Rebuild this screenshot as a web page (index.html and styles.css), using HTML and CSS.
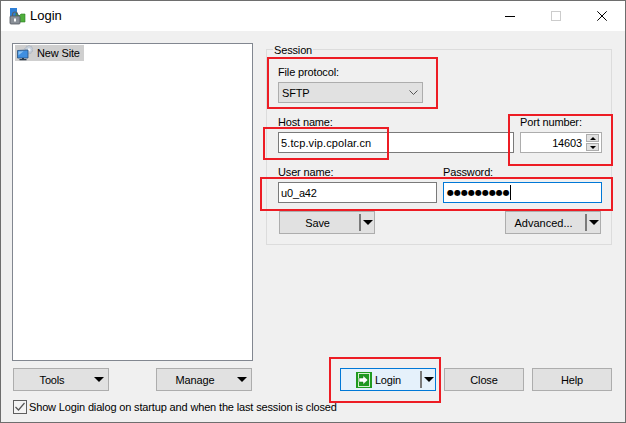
FILE: index.html
```html
<!DOCTYPE html>
<html lang="en">
<head>
<meta charset="utf-8">
<title>Login</title>
<link rel="stylesheet" href="styles.css">
</head>
<body>
<div class="window">
  <header class="titlebar">
    <svg class="app-icon" width="17" height="18" viewBox="0 0 17 18">
      <path d="M1 1h7v5l3 3-5 2H1z" fill="#2f7fd6"/>
      <path d="M7 6l3 3 2-2h4v8H7z" fill="#4fae3c" stroke="#2c7f22" stroke-width=".6"/>
      <path d="M3.500 9V7.500a2.500 2.500 0 0 1 5 0V9" fill="none" stroke="#5a6068" stroke-width="1.200"/>
      <rect x="1" y="9" width="10" height="8" rx="1" fill="#8a9098" stroke="#50565e" stroke-width=".8"/>
      <rect x="5" y="11.500" width="2" height="3" fill="#fff"/>
    </svg>
    <span class="title">Login</span>
    <div class="win-controls">
      <span class="win-btn"><svg width="10" height="10" viewBox="0 0 10 10"><path d="M0 5.500h10" stroke="#000"/></svg></span>
      <span class="win-btn"><svg width="10" height="10" viewBox="0 0 10 10"><rect x=".5" y=".5" width="9" height="9" fill="none" stroke="#ccc"/></svg></span>
      <span class="win-btn"><svg width="10" height="10" viewBox="0 0 10 10"><path d="M.3.3l9.400 9.400M9.700.3L.3 9.700" stroke="#000" fill="none"/></svg></span>
    </div>
  </header>

  <main class="content">
    <section class="left">
      <div class="tree">
        <div class="tree-item">
          <svg class="site-icon" width="16" height="16" viewBox="0 0 16 16">
            <path d="M12 0l1 1.500 1.500-.5.300 1.700 1.200.8-1 1.300 1 1.400-1.700.6-.3 1.700-1.500-.6-1 1.300-1-1.300-1.500.600-.3-1.700L7.500 6.200l1-1.400-1-1.300 1.700-.8.300-1.700 1.500.5z" fill="#c6cfda" stroke="#9aa5b3" stroke-width=".4"/>
            <circle cx="12" cy="4.800" r="1.500" fill="#f2f5f8"/>
            <path d="M.5 5.500l10.500-.5v8H.5z" fill="#3f8fe0" stroke="#28527f" stroke-width=".8"/>
            <path d="M1.500 6.500l5-.2-5 4z" fill="#8cc3f2"/>
            <path d="M5 13h2v1h2.500v1.200h-7V14H5z" fill="#2a3a4a"/>
          </svg>
          <span>New Site</span>
        </div>
      </div>
      <div class="left-buttons">
        <button class="btn wide"><span class="btn-label">Tools</span><span class="caret"></span></button>
        <button class="btn wide"><span class="btn-label">Manage</span><span class="caret"></span></button>
      </div>
      <label class="show-login">
        <svg class="check" width="14" height="14" viewBox="0 0 14 14">
          <rect x=".5" y=".5" width="13" height="13" fill="#f4f4f4" stroke="#5f5f5f"/>
          <path d="M2.500 7l3 3 6-7" fill="none" stroke="#555" stroke-width="1.200"/>
        </svg>
        <span>Show Login dialog on startup and when the last session is closed</span>
      </label>
    </section>

    <section class="right">
      <div class="session">
        <span class="legend">Session</span>
        <div class="field">
          <span class="field-label">File protocol:</span>
          <div class="select">
            <span>SFTP</span>
            <svg width="9" height="5" viewBox="0 0 9 5"><path d="M.5.500l4 4 4-4" fill="none" stroke="#555"/></svg>
          </div>
        </div>
        <div class="row">
          <div class="field grow">
            <span class="field-label">Host name:</span>
            <input class="input host-input" type="text" value="5.tcp.vip.cpolar.cn">
          </div>
          <div class="field port">
            <span class="field-label">Port number:</span>
            <div class="port-box">
              <span class="port-value">14603</span>
              <div class="spin">
                <span class="spin-btn"><span class="tri-up"></span></span>
                <span class="spin-btn"><span class="tri-down"></span></span>
              </div>
            </div>
          </div>
        </div>
        <div class="row">
          <div class="field grow">
            <span class="field-label">User name:</span>
            <input class="input" type="text" value="u0_a42">
          </div>
          <div class="field grow">
            <span class="field-label">Password:</span>
            <div class="input focused"><span class="dots">●●●●●●●●●</span><span class="text-caret"></span></div>
          </div>
        </div>
        <div class="session-buttons">
          <button class="btn wide split"><span class="btn-label">Save</span><span class="sep"></span><span class="caret"></span></button>
          <button class="btn wide split"><span class="btn-label advanced">Advanced...</span><span class="sep"></span><span class="caret"></span></button>
        </div>
      </div>

      <div class="main-buttons">
        <button class="btn wide split primary">
          <span class="btn-label">
            <svg class="login-icon" width="16" height="16" viewBox="0 0 16 16">
              <rect width="16" height="16" fill="#1f9a1f"/>
              <rect x="2.500" y="1.500" width="11" height="13" fill="none" stroke="#d6f0d0"/>
              <path d="M3 6h4V3.500L12 8l-5 4.500V10H3z" fill="#fff" stroke="#127012" stroke-width=".5"/>
            </svg>
            Login
          </span><span class="sep"></span><span class="caret"></span>
        </button>
        <button class="btn narrow">Close</button>
        <button class="btn narrow">Help</button>
      </div>
    </section>
  </main>

  <div class="mark mark-protocol"></div>
  <div class="mark mark-host"></div>
  <div class="mark mark-port"></div>
  <div class="mark mark-user"></div>
  <div class="mark mark-login"></div>
</div>
</body>
</html>
```

FILE: styles.css
```css
* { box-sizing: border-box; }
html, body { margin: 0; padding: 0; }
body {
  width: 626px;
  height: 423px;
  overflow: hidden;
  font: 11px/14px "Liberation Sans", Arial, sans-serif;
  letter-spacing: -0.15px;
  color: #000;
  background: #f0f0f0;
}
.window {
  position: relative;
  width: 626px;
  height: 423px;
  display: flex;
  flex-direction: column;
  border: 1px solid #6e6e6e;
  background: #f0f0f0;
}
.titlebar {
  flex: none;
  height: 30px;
  background: #fff;
  display: flex;
  align-items: center;
  padding-left: 8px;
}
.app-icon { flex: none; }
.title { margin-left: 4px; font-size: 13px; letter-spacing: 0; }
.win-controls { margin-left: auto; display: flex; }
.win-btn {
  width: 46px;
  height: 30px;
  display: flex;
  align-items: center;
  justify-content: center;
}
.content {
  flex: 1;
  display: flex;
  gap: 13px;
  padding: 12px 12px 8px 11px;
  min-height: 0;
}
.left { width: 241px; flex: none; display: flex; flex-direction: column; }
.tree {
  flex: 1;
  background: #fff;
  border: 1px solid #828790;
  padding: 1px 2px;
}
.tree-item {
  width: 69px;
  height: 16px;
  display: flex;
  align-items: center;
  gap: 4px;
  padding-left: 2px;
  background: #cfcfcf;
  white-space: nowrap;
}
.site-icon { flex: none; }
.left-buttons {
  margin-top: 7px;
  padding-left: 1px;
  padding-right: 1px;
  display: flex;
  justify-content: space-between;
}
.btn {
  font: inherit;
  letter-spacing: inherit;
  color: #000;
  height: 23px;
  padding: 0;
  background: #e1e1e1;
  border: 1px solid #adadad;
  display: flex;
  align-items: center;
  justify-content: center;
}
.wide { width: 96px; padding-right: 4px; }
.wide.split { padding-right: 2px; }
.narrow { width: 80px; }
.btn-label {
  flex: 1;
  display: flex;
  align-items: center;
  justify-content: center;
  gap: 3px;
}
.split .btn-label { padding-right: 4px; }
.advanced { letter-spacing: 0; }
.caret {
  flex: none;
  width: 0;
  height: 0;
  margin-left: 4px;
  border-left: 5px solid transparent;
  border-right: 5px solid transparent;
  border-top: 5px solid #000;
}
.split .caret { margin-left: 2px; margin-right: -1px; }
.sep { flex: none; width: 2px; height: 17px; background: #7a7a7a; }
.primary { background: #e5f1fb; border-color: #0078d7; }
.show-login {
  margin-top: 9px;
  height: 14px;
  padding-left: 1px;
  display: flex;
  align-items: center;
  gap: 2px;
  white-space: nowrap;
}
.check { flex: none; }
.right {
  width: 346px;
  flex: none;
  display: flex;
  flex-direction: column;
}
.session {
  position: relative;
  margin-top: 6px;
  height: 196px;
  border: 1px solid #dcdcdc;
  padding: 15px 9px 0 11px;
}
.legend {
  position: absolute;
  top: -7px;
  left: 6px;
  padding: 0 1px;
  background: #f0f0f0;
}
.field { display: flex; flex-direction: column; }
.field-label { height: 17px; }
.grow { flex: 1; min-width: 0; }
.port { width: 82px; flex: none; }
.row { display: flex; gap: 6px; margin-top: 12px; }
.select {
  width: 145px;
  height: 21px;
  background: #e1e1e1;
  border: 1px solid #adadad;
  display: flex;
  align-items: center;
  justify-content: space-between;
  padding: 0 4px 0 3px;
}
.input {
  display: flex;
  align-items: center;
  width: 100%;
  height: 21px;
  font: inherit;
  letter-spacing: inherit;
  color: #000;
  background: #fff;
  border: 1px solid #7a7a7a;
  border-radius: 0;
  padding: 0 2px;
  outline: none;
}
.host-input { letter-spacing: 0.12px; }
.focused { border-color: #0078d7; padding-left: 3px; }
.dots { font-size: 8px; letter-spacing: 0; font-family: "DejaVu Sans", sans-serif; }
.text-caret { width: 1px; height: 15px; background: #000; }
.port-box {
  height: 21px;
  background: #fff;
  border: 1px solid #adadad;
  display: flex;
  align-items: center;
  padding: 0 1px 0 0;
}
.port-value { flex: 1; text-align: right; padding-right: 4px; }
.spin { display: flex; flex-direction: column; gap: 1px; width: 13px; margin-right: 1px; }
.spin-btn {
  height: 8px;
  background: #e1e1e1;
  border: 1px solid #adadad;
  display: flex;
  align-items: center;
  justify-content: center;
}
.tri-up, .tri-down {
  width: 0;
  height: 0;
  border-left: 3px solid transparent;
  border-right: 3px solid transparent;
}
.tri-up { border-bottom: 3px solid #000; }
.tri-down { border-top: 3px solid #000; }
.session-buttons {
  display: flex;
  justify-content: space-between;
  margin: 8px 1px 0;
}
.main-buttons {
  margin-top: auto;
  margin-bottom: 23px;
  display: flex;
  justify-content: flex-end;
  gap: 8px;
}
.login-icon { flex: none; }
.mark {
  position: absolute;
  border: 2px solid #ed1c24;
  pointer-events: none;
}
.mark-protocol { left: 266px; top: 56px; width: 171px; height: 52px; }
.mark-host { left: 262px; top: 126px; width: 126px; height: 33px; }
.mark-port { left: 507px; top: 113px; width: 105px; height: 52px; }
.mark-user { left: 259px; top: 176px; width: 353px; height: 34px; }
.mark-login { left: 328px; top: 356px; width: 112px; height: 46px; }
```
